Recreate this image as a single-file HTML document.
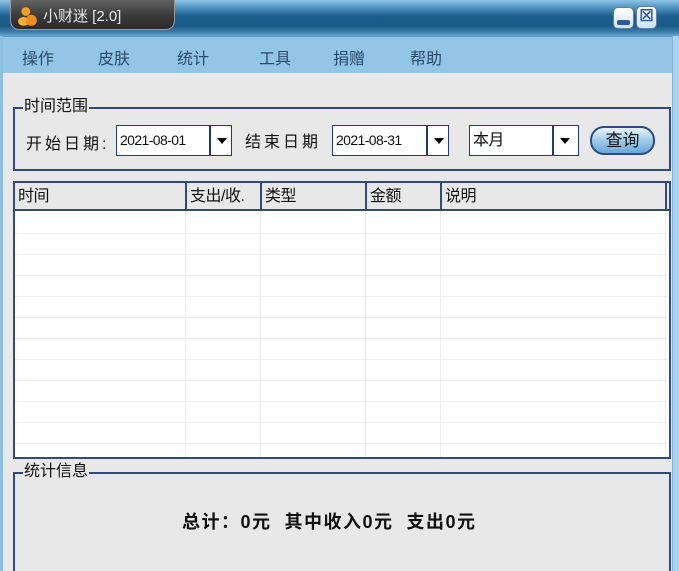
<!DOCTYPE html>
<html><head><meta charset="utf-8"><style>
*{margin:0;padding:0;box-sizing:border-box}
html{overflow:hidden;height:571px}
body{width:679px;height:571px;overflow:hidden;background:#e8e8e8;font-family:"Liberation Sans","Noto Sans CJK SC",sans-serif;position:relative;font-size:15px;color:#111}
.abs{position:absolute}
#title{left:0;top:0;width:679px;height:36px;background:linear-gradient(#8ec3e4 0px,#4d92c0 8px,#1d5f8e 16px,#1b5a88 26px,#3c7eab 32px,#6aa6cf 36px)}
#tab{left:10px;top:-4px;width:165px;height:34px;border-radius:0 0 9px 9px;background:linear-gradient(#6a6a6a,#3c3c3c 55%,#2a2a2a);border:1px solid #999;color:#e8e8e8;font-size:15px;line-height:33px;padding-left:32px;padding-top:3px}
#menu{left:3px;top:36px;width:669px;height:37px;background:#92c5e6;border-top:1px solid #5c9bc7}
#menu span{position:absolute;top:8px;font-size:16px;color:#2a4a6a}
.lb{left:0;top:36px;width:3px;height:535px;background:#8bc0e2}
.rb{left:672px;top:36px;width:7px;height:535px;background:#a9d2ec;border-left:1px solid #7fb2d6}
.grp{border:2px solid #33487c}
.leg{background:#e8e8e8;font-size:16px;padding:0 1px;line-height:16px}
.combo{background:#fff;border:1px solid #1e3a78;height:31px;font-size:14px;line-height:29px;padding-left:3px;letter-spacing:-0.6px}
.combo .arr{position:absolute;right:0;top:0;width:22px;height:29px;border-left:2px solid #1e3a78;}
.combo .arr:after{content:"";position:absolute;left:6px;top:12px;border:5px solid transparent;border-top:6px solid #000;border-bottom:0}
.vl{position:absolute;top:0;width:1px;background:#eee}
.hl{position:absolute;left:0;height:1px;background:#eee;width:652px}
.th{position:absolute;top:0;height:26px;border-right:2px solid #33487c;font-size:16px;line-height:28px;padding-left:3px;letter-spacing:-0.5px}
</style></head><body>
<div class="abs" id="title"></div>
<div class="abs" id="tab"><svg class="abs" style="left:6px;top:9px" width="22" height="22" viewBox="0 0 20 20"><circle cx="8" cy="5" r="4" fill="#f0a020"/><ellipse cx="6" cy="14" rx="5" ry="4" fill="#f5b030"/><ellipse cx="13" cy="13" rx="5" ry="5" fill="#e89018"/></svg>小财迷 [2.0]</div>
<div class="abs" style="left:613px;top:7px;width:21px;height:22px;border-radius:5px;background:linear-gradient(#fff,#cfe3f3);border:1px solid #5b7fa8"><div class="abs" style="left:3px;top:12px;width:13px;height:5px;background:#2c5aa0;border-radius:2px"></div></div>
<div class="abs" style="left:636px;top:6px;width:21px;height:23px;border-radius:5px;background:linear-gradient(#fff,#cfe3f3);border:1px solid #5b7fa8;color:#2c5aa0;font-weight:bold;font-size:16px;text-align:center;line-height:20px">☒</div>
<div class="abs" id="menu"><span style="left:19px">操作</span><span style="left:95px">皮肤</span><span style="left:174px">统计</span><span style="left:256px">工具</span><span style="left:330px">捐赠</span><span style="left:407px">帮助</span></div>
<div class="abs lb"></div><div class="abs rb"></div>

<div class="abs grp" style="left:13px;top:107px;width:658px;height:64px"></div>
<div class="abs leg" style="left:23px;top:99px">时间范围</div>
<div class="abs" style="left:26px;top:130px;letter-spacing:3px;font-size:16px">开始日期:</div>
<div class="abs combo" style="left:116px;top:125px;width:116px">2021-08-01<div class="arr"></div></div>
<div class="abs" style="left:245px;top:128px;letter-spacing:3px;font-size:16px">结束日期</div>
<div class="abs combo" style="left:332px;top:125px;width:117px">2021-08-31<div class="arr"></div></div>
<div class="abs combo" style="left:469px;top:125px;width:110px;font-size:16px">本月<div class="arr" style="width:26px"></div></div>
<div class="abs" style="left:590px;top:126px;width:65px;height:29px;border-radius:14px;border:2px solid #2a4a88;background:linear-gradient(#e8f4fc,#9fcbe8 50%,#6aa8d8);text-align:center;line-height:25px;font-size:17px;color:#111">查询</div>

<div class="abs" style="left:13px;top:181px;width:658px;height:278px;border:2px solid #33487c;background:#fff;overflow:hidden">
 <div class="abs" style="left:0;top:0;width:654px;height:28px;background:#e8e8e8;border-bottom:2px solid #33487c"></div>
 <div class="th" style="left:0;width:172px">时间</div>
 <div class="th" style="left:172px;width:75px">支出/收.</div>
 <div class="th" style="left:247px;width:105px">类型</div>
 <div class="th" style="left:352px;width:75px">金额</div>
 <div class="th" style="left:427px;width:225px">说明</div>
 <div class="vl" style="left:170px;top:29px;height:250px"></div>
 <div class="vl" style="left:245px;top:29px;height:250px"></div>
 <div class="vl" style="left:350px;top:29px;height:250px"></div>
 <div class="vl" style="left:425px;top:29px;height:250px"></div>
 <div class="vl" style="left:650px;top:29px;height:250px"></div>
 <div class="hl" style="top:50px"></div><div class="hl" style="top:71px"></div><div class="hl" style="top:92px"></div><div class="hl" style="top:113px"></div><div class="hl" style="top:134px"></div><div class="hl" style="top:155px"></div><div class="hl" style="top:176px"></div><div class="hl" style="top:197px"></div><div class="hl" style="top:218px"></div><div class="hl" style="top:239px"></div><div class="hl" style="top:260px"></div>
</div>

<div class="abs grp" style="left:13px;top:472px;width:658px;height:102px;border-bottom:none"></div>
<div class="abs leg" style="left:23px;top:464px">统计信息</div>
<div class="abs" style="left:182px;top:508px;font-weight:bold;font-size:18px;letter-spacing:1.5px;white-space:nowrap">总计：0元 &nbsp;其中收入0元 &nbsp;支出0元</div>
</body></html>
